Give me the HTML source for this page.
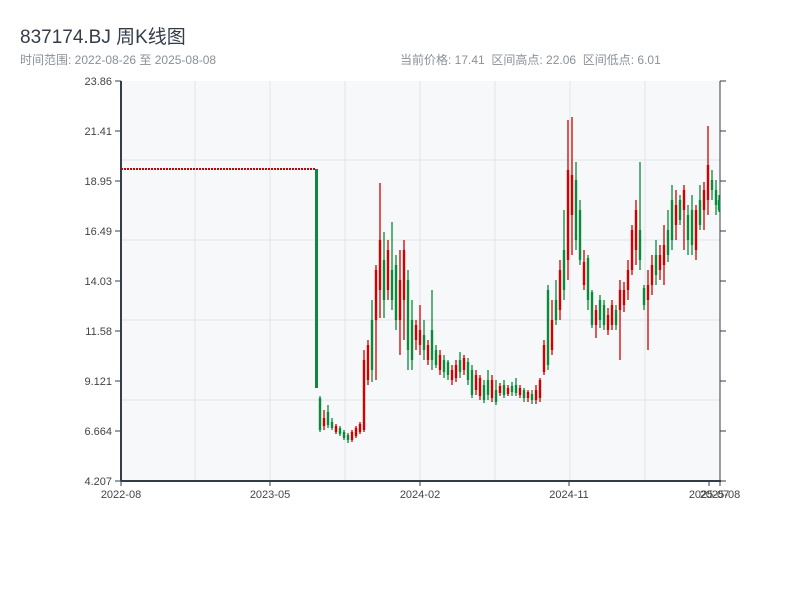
<!DOCTYPE html>
<html><head><meta charset="utf-8"><style>
body{margin:0;width:800px;height:600px;background:#fff;font-family:"Liberation Sans","Noto Sans CJK SC",sans-serif;overflow:hidden;position:relative}
.t{position:absolute;white-space:nowrap}
</style></head><body>
<div class="t" style="left:20px;top:22px;font-size:19px;color:#333d4a">837174.BJ 周K线图</div>
<div class="t" style="left:20px;top:51px;font-size:12px;color:#8a9099">时间范围: 2022-08-26 至 2025-08-08</div>
<div class="t" style="left:400px;top:51px;font-size:12px;color:#8a9099">当前价格: 17.41&nbsp; 区间高点: 22.06&nbsp; 区间低点: 6.01</div>
<svg width="800" height="600" style="position:absolute;left:0;top:0" font-family="Liberation Sans, sans-serif" font-size="11" fill="#444">
<rect x="121" y="81" width="599" height="400" fill="#f7f8fa"/>
<g stroke="#e2e4e8">
<path d="M195 81V481M270 81V481M345 81V481M420 81V481M495 81V481M570 81V481M645 81V481M121 160H720M121 240H720M121 320H720M121 400H720"/>
</g>
<g stroke="#333d4a">
<path d="M115 81H121M115 131H121M115 181H121M115 231H121M115 281H121M115 331H121M115 381H121M115 431H121M115 481H121M720 81H726M720 131H726M720 181H726M720 231H726M720 281H726M720 331H726M720 381H726M720 431H726M720 481H726M121 481V486M270 481V486M420 481V486M569 481V486M709 481V486M720 481V486M720 81V481"/>
<path d="M121 81V481M121 481H721" stroke-width="2"/>
</g>
<g text-anchor="end">
<text x="112" y="85">23.86</text><text x="112" y="135">21.41</text><text x="112" y="185">18.95</text><text x="112" y="235">16.49</text><text x="112" y="285">14.03</text><text x="112" y="335">11.58</text><text x="112" y="385">9.121</text><text x="112" y="435">6.664</text><text x="112" y="485">4.207</text>
</g>
<g text-anchor="middle">
<text x="121" y="498">2022-08</text><text x="270" y="498">2023-05</text><text x="420" y="498">2024-02</text><text x="569" y="498">2024-11</text><text x="709" y="498">2025-07</text><text x="720" y="498">2025-08</text>
</g>
<line x1="121" y1="169" x2="316" y2="169" stroke="#c00" stroke-width="2" stroke-dasharray="2,1"/>
<rect x="315" y="169" width="3" height="219" fill="#0a8a3a"/>
<path stroke="#0a8a3a" stroke-width="1.3" fill="none" d="M320 396V432M328 405V428M332 418V430M340 426V436M344 430V440M348 433V443M372 300V382M384 232V318M392 222V310M396 255V330M408 270V370M412 300V370M424 320V360M432 290V370M436 345V368M444 355V378M448 360V380M460 352V378M468 358V385M472 365V398M484 380V403M488 370V400M496 380V405M504 380V398M512 382V396M516 378V396M524 388V402M532 390V404M548 285V370M556 280V325M564 210V300M576 162V250M580 200V265M588 255V310M592 290V328M600 295V328M604 300V330M616 305V330M640 162V270M644 285V310M656 240V285M668 210V262M672 185V250M680 195V225M688 205V255M692 195V255M700 185V230M712 170V200M716 180V215M719 195V212"/>
<path stroke="#0a8a3a" stroke-width="2.4" fill="none" d="M320 398V430M328 412V425M332 422V428M340 428V434M344 432V438M348 435V440M372 320V370M384 260V300M392 270V300M396 265V320M408 280V350M412 320V360M424 335V350M432 330V360M436 350V365M444 360V372M448 362V375M460 360V372M468 362V380M472 370V395M484 385V400M488 380V395M496 390V402M504 385V395M512 386V392M516 385V393M524 390V398M532 394V400M548 290V365M556 300V320M564 250V290M576 180V240M580 210V260M588 258V300M592 292V325M600 300V320M604 305V325M616 310V325M640 230V260M644 288V305M656 255V275M668 230V255M672 200V240M680 200V220M688 215V240M692 210V245M700 200V225M712 180V190M716 190V205M719 200V210"/>
<path stroke="#d40000" stroke-width="1.3" fill="none" d="M324 410V430M336 424V434M352 430V442M356 426V438M360 422V434M364 350V432M368 340V385M376 265V380M380 183V318M388 240V300M400 250V355M404 240V340M416 320V350M420 305V355M428 340V365M440 350V375M452 365V385M456 360V382M464 355V375M476 370V395M480 375V400M492 375V402M500 383V396M508 385V396M520 385V398M528 390V402M536 385V404M540 378V402M544 340V375M552 300V355M560 260V320M568 120V280M572 117V255M584 250V290M596 305V338M608 308V335M612 300V330M620 280V360M624 282V312M628 260V300M632 225V275M636 200V265M648 270V350M652 255V295M660 245V280M664 225V285M676 190V240M684 185V250M696 205V260M704 182V230M708 126V215"/>
<path stroke="#d40000" stroke-width="2.4" fill="none" d="M324 418V426M336 426V432M352 432V440M356 428V436M360 424V432M364 360V430M368 345V380M376 270V320M380 240V290M388 250V290M400 280V320M404 250V300M416 325V340M420 330V345M428 345V360M440 355V370M452 370V380M456 365V378M464 358V370M476 375V390M480 378V396M492 380V398M500 386V393M508 388V394M520 388V395M528 392V398M536 390V400M540 380V398M544 345V372M552 320V350M560 270V310M568 170V260M572 175V215M584 262V285M596 310V325M608 315V330M612 305V325M620 290V310M624 290V305M628 270V290M632 230V270M636 210V250M648 285V300M652 265V285M660 255V270M664 245V265M676 205V225M684 190V210M696 210V250M704 190V210M708 165V200"/>
</svg>
</body></html>
